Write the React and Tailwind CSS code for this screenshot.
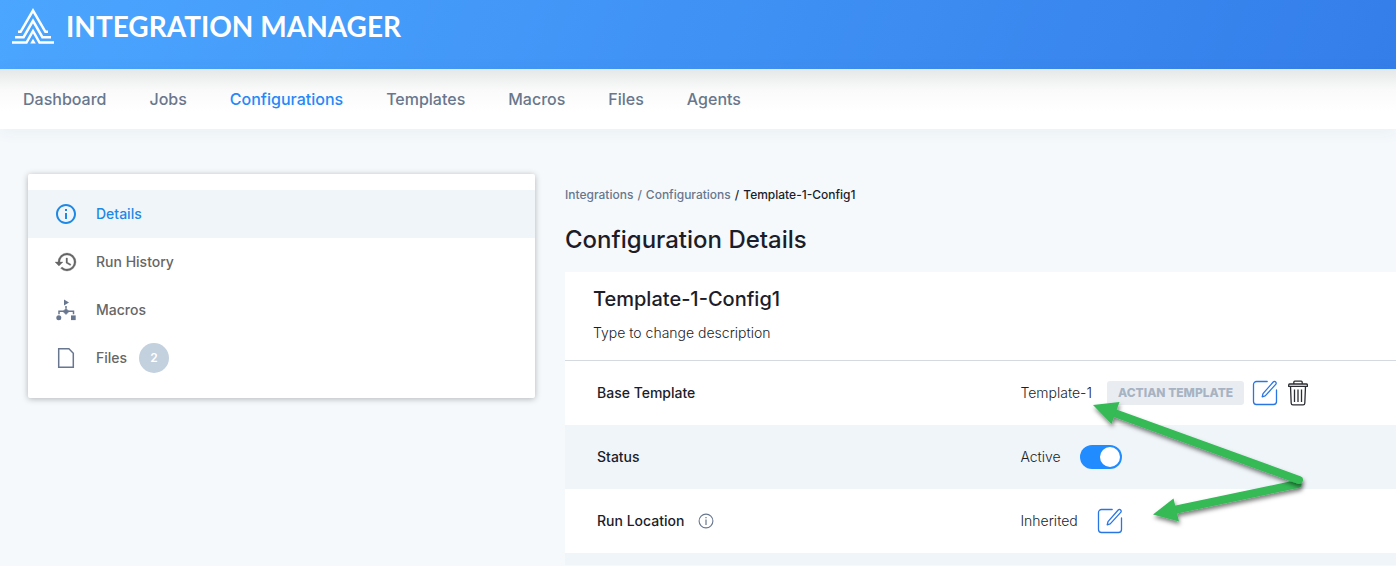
import React from "react";

const navItems = ["Dashboard", "Jobs", "Configurations", "Templates", "Macros", "Files", "Agents"];

function Logo() {
  return (
    <svg width="42" height="36" viewBox="0 0 42 36" fill="none" stroke="#fff" strokeWidth="2.5" aria-hidden="true">
      <path d="M6 23.8h2.600L21 2.600l12.400 21.200H36" />
      <path d="M3 29.200h8.600L21 12.800l9.400 16.400H39" />
      <path d="M0 34.500h14.500L21 23l6.500 11.500H42" />
      <path d="M21 30.800l-2.800 4.800h5.600z" fill="#fff" stroke="none" />
    </svg>
  );
}

function DetailsIcon() {
  return (
    <svg width="24" height="24" viewBox="0 0 24 24" fill="#1e88e5" aria-hidden="true">
      <path d="M11 7h2v2h-2zm0 4h2v6h-2zm1-9C6.480 2 2 6.480 2 12s4.480 10 10 10 10-4.480 10-10S17.520 2 12 2zm0 18c-4.410 0-8-3.590-8-8s3.590-8 8-8 8 3.590 8 8-3.590 8-8 8z" />
    </svg>
  );
}

function HistoryIcon() {
  return (
    <svg width="24" height="24" viewBox="0 0 24 24" fill="#666" aria-hidden="true">
      <path d="M13 3a9 9 0 0 0-9 9H1l3.890 3.890.07.14L9 12H6c0-3.870 3.130-7 7-7s7 3.130 7 7-3.130 7-7 7c-1.930 0-3.680-.79-4.940-2.060l-1.420 1.420A8.954 8.954 0 0 0 13 21a9 9 0 0 0 0-18zm-1 5v5l4.280 2.540.72-1.210-3.500-2.080V8H12z" stroke="#666" strokeWidth="0.3" />
    </svg>
  );
}

function MacrosIcon() {
  return (
    <svg width="24" height="24" viewBox="0 0 24 24" fill="#68778f" aria-hidden="true">
      <path d="M10 1.500l5 3-5 3z" />
      <path d="M12 10.500l3 3-3 3-3-3z" stroke="#68778f" strokeWidth="0.6" strokeLinejoin="round" />
      <circle cx="4.800" cy="19.800" r="2.500" />
      <path d="M17 17.400h4.700v4.700H17z" />
      <path d="M12 8v2.500M10 13.300H5v3M14 13.300h5.500v3" fill="none" stroke="#68778f" strokeWidth="1.500" />
    </svg>
  );
}

function FileIcon() {
  return (
    <svg width="24" height="24" viewBox="0 0 24 24" fill="none" stroke="#68778f" strokeWidth="1.5" aria-hidden="true">
      <path d="M4.700 2.700h10.200l4.400 4.500v14.100H4.700z" />
    </svg>
  );
}

function EditIcon() {
  return (
    <svg width="26" height="26" viewBox="0 0 26 26" fill="none" stroke="#2876e4" strokeWidth="1.3" strokeLinecap="round" strokeLinejoin="round" aria-hidden="true">
      <path d="M15.200 1.500H4.500a3 3 0 0 0-3 3v17a3 3 0 0 0 3 3h17a3 3 0 0 0 3-3V10" />
      <path d="M21.200 2a1.700 1.700 0 0 1 2.500 2.400L13.200 15.900l-3 1 .8-3.300z" />
    </svg>
  );
}

function TrashIcon() {
  return (
    <svg width="20" height="26" viewBox="0 0 20 26" fill="none" stroke="#2c2d33" strokeWidth="1.3" strokeLinejoin="round" aria-hidden="true">
      <path d="M1.600 4h16.800a1 1 0 0 1 1 1v1.400H.7V5a1 1 0 0 1 .9-1z" />
      <path d="M5.800 4V2.200a1 1 0 0 1 1-1h6.400a1 1 0 0 1 1 1V4" />
      <path d="M2.500 6.400l.7 16.800a1.700 1.700 0 0 0 1.700 1.600h10.200a1.700 1.700 0 0 0 1.700-1.600l.7-16.800" />
      <path d="M6.500 9.500v12.400M10 9.500v12.400M13.500 9.500v12.400" />
    </svg>
  );
}

function HelpIcon() {
  return (
    <svg width="16" height="16" viewBox="0 0 16 16" fill="none" stroke="#68778f" aria-hidden="true">
      <circle cx="8" cy="8" r="6.9" strokeWidth="1.1" />
      <path d="M8 6.500v5.400M8 4v1.300" strokeWidth="1.2" />
    </svg>
  );
}

const sideItems = [
  { label: "Details", Icon: DetailsIcon, active: true },
  { label: "Run History", Icon: HistoryIcon },
  { label: "Macros", Icon: MacrosIcon },
  { label: "Files", Icon: FileIcon, count: 2 },
];

function Row({ label, help, shaded, children }) {
  return (
    <tr className={shaded ? "h-16 bg-[#f0f5f9]" : "h-16 bg-white"}>
      <th scope="row" className="w-[53%] pl-8 text-left font-medium">
        <span className="flex items-center gap-3.5">
          {label}
          {help && (
            <button type="button" aria-label={"About " + label}>
              <HelpIcon />
            </button>
          )}
        </span>
      </th>
      <td className="pl-[15px]">
        <div className="flex items-center">{children}</div>
      </td>
    </tr>
  );
}

function Arrows() {
  return (
    <svg className="pointer-events-none absolute left-[1085px] top-[395px]" width="235" height="140" viewBox="1085 395 235 140" aria-hidden="true">
      <defs>
        <filter id="arrow-shadow" x="-10%" y="-10%" width="125%" height="135%">
          <feDropShadow dx="1" dy="3" stdDeviation="2" floodColor="#000" floodOpacity="0.5" />
        </filter>
      </defs>
      <g fill="#34ba57" stroke="#34ba57" strokeLinecap="round" filter="url(#arrow-shadow)">
        <path d="M1297.500 484L1174 510" strokeWidth="8" />
        <path d="M1153 514.500L1173.500 498.500L1179 521.500z" stroke="none" />
      </g>
      <g fill="#34ba57" stroke="#34ba57" strokeLinecap="round" filter="url(#arrow-shadow)">
        <path d="M1299 480L1113 412.500" strokeWidth="8" />
        <path d="M1093 405L1119.500 402L1111.500 424z" stroke="none" />
      </g>
    </svg>
  );
}

export default function App() {
  return (
    <div className="relative min-h-screen overflow-hidden bg-[#f5f9fc] font-['Inter',sans-serif] text-sm text-[#1c1d29]">
      <header className="flex h-[69px] items-start gap-3 bg-linear-[110deg] from-[#4ba6ff] to-[#347eea] px-3 pt-2">
        <Logo />
        <span className="font-['Lato',sans-serif] text-[28px] leading-9 font-bold text-white">INTEGRATION MANAGER</span>
      </header>

      <nav className="flex h-[60px] items-center gap-[43px] bg-white bg-linear-to-b from-[#e5e8e8] via-[#fafafa] via-35% to-white to-70% px-[23px] text-base font-medium text-[#68778d] shadow-[0_2px_16px_rgba(30,60,90,0.06)]">
        {navItems.map((item) => (
          <a key={item} href="#" className={item === "Configurations" ? "text-[#2688f8]" : ""}>
            {item}
          </a>
        ))}
      </nav>

      <div className="grid grid-cols-[507fr_831fr] items-start gap-[30px] pt-[45px] pl-7">
        <aside className="rounded-xs bg-white py-4 shadow-[0_1px_6px_rgba(0,0,0,0.28)]">
          <ul>
            {sideItems.map(({ label, Icon, active, count }) => (
              <li key={label}>
                <a
                  href="#"
                  className={
                    active
                      ? "flex h-12 items-center bg-[#f0f5f9] px-[26px] font-medium text-[#1e88e5]"
                      : "flex h-12 items-center px-[26px] font-medium text-[#666]"
                  }
                >
                  <Icon />
                  <span className="ml-[18px]">{label}</span>
                  {count && (
                    <span className="ml-3 flex size-[30px] items-center justify-center rounded-full bg-[#c3d0de] text-xs font-semibold text-white">
                      {count}
                    </span>
                  )}
                </a>
              </li>
            ))}
          </ul>
        </aside>

        <main>
          <nav aria-label="Breadcrumb" className="flex gap-1 pt-3 text-xs leading-[18px] font-medium text-[#68778d]">
            <a href="#">Integrations</a>
            <span>/</span>
            <a href="#">Configurations</a>
            <span className="text-[#1c1d29]">/</span>
            <span className="text-[#1c1d29]">Template-1-Config1</span>
          </nav>
          <h1 className="pt-5 text-2xl font-medium">Configuration Details</h1>

          <section className="mt-4 bg-white">
            <div className="h-[89px] border-b border-[#d5dae1] px-7 pt-[13px]">
              <h2 className="text-xl leading-7 font-medium">Template-1-Config1</h2>
              <p className="pt-2.5 leading-5 font-light">Type to change description</p>
            </div>
            <table className="w-full table-fixed">
              <tbody>
                <Row label="Base Template">
                  <span className="font-light">Template-1</span>
                  <span className="ml-[15px] flex h-6 items-center rounded-[3px] bg-[#e9edf2] px-[11px] text-xs font-extrabold whitespace-nowrap text-[#a7b3c2]">
                    ACTIAN TEMPLATE
                  </span>
                  <button type="button" aria-label="Edit base template" className="ml-2">
                    <EditIcon />
                  </button>
                  <button type="button" aria-label="Delete base template" className="ml-2.5">
                    <TrashIcon />
                  </button>
                </Row>
                <Row label="Status" shaded>
                  <label htmlFor="status" className="font-light">Active</label>
                  <span className="relative ml-[19px] flex">
                    <input id="status" type="checkbox" role="switch" defaultChecked className="peer h-6 w-[42px] appearance-none rounded-full bg-[#b8c3cf] checked:bg-[#218cff]" />
                    <span className="pointer-events-none absolute top-0.5 left-0.5 size-5 rounded-full bg-white peer-checked:left-5" />
                  </span>
                </Row>
                <Row label="Run Location" help>
                  <span className="font-light">Inherited</span>
                  <button type="button" aria-label="Edit run location" className="ml-[19px]">
                    <EditIcon />
                  </button>
                </Row>
                <tr className="h-3 bg-[#f0f5f9]">
                  <td colSpan={2} />
                </tr>
              </tbody>
            </table>
          </section>
        </main>
      </div>
      <Arrows />
    </div>
  );
}
